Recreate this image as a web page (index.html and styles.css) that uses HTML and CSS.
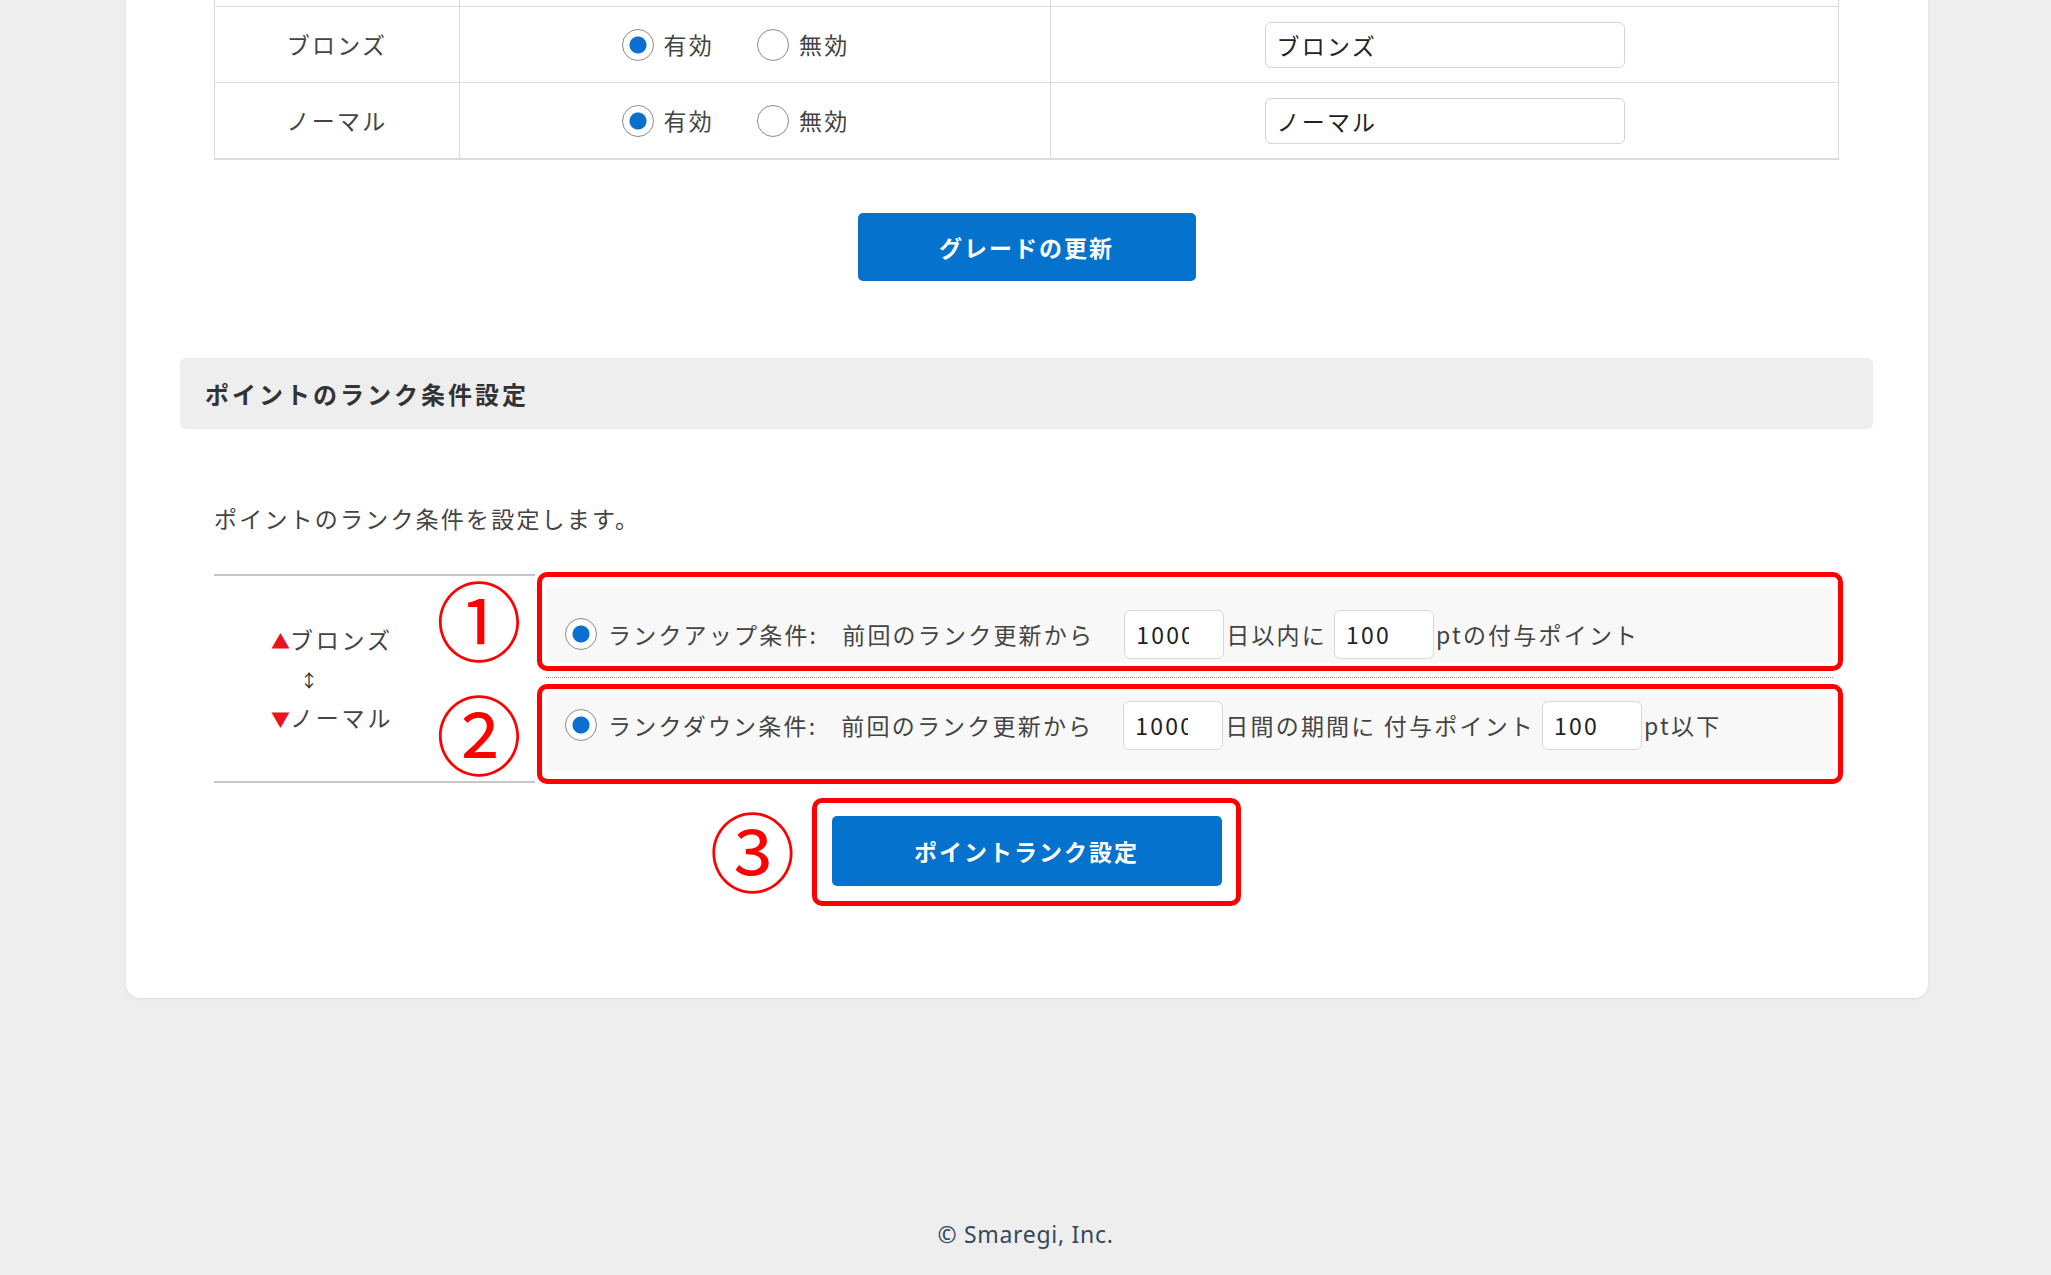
FILE: index.html
```html
<!DOCTYPE html>
<html lang="ja">
<head>
  <meta charset="UTF-8">
  <title>ポイントのランク条件設定</title>
  <link rel="stylesheet" href="styles.css">
</head>
<body>
  <div class="card">
    <table class="grade-table">
      <tr class="row-hidden">
        <td class="grade-name"></td>
        <td class="grade-state"></td>
        <td class="grade-input"></td>
      </tr>
      <tr>
        <td class="grade-name">ブロンズ</td>
        <td class="grade-state">
          <div class="radios">
            <label class="radio-label"><input type="radio" name="g1" checked>有効</label>
            <label class="radio-label"><input type="radio" name="g1">無効</label>
          </div>
        </td>
        <td class="grade-input"><input type="text" class="text-input" value="ブロンズ"></td>
      </tr>
      <tr>
        <td class="grade-name">ノーマル</td>
        <td class="grade-state">
          <div class="radios">
            <label class="radio-label"><input type="radio" name="g2" checked>有効</label>
            <label class="radio-label"><input type="radio" name="g2">無効</label>
          </div>
        </td>
        <td class="grade-input"><input type="text" class="text-input" value="ノーマル"></td>
      </tr>
    </table>

    <div class="btn-row">
      <button class="btn">グレードの更新</button>
    </div>

    <h2 class="section-title">ポイントのランク条件設定</h2>

    <p class="desc">ポイントのランク条件を設定します。</p>

    <div class="rank-block">
      <div class="rank-names">
        <div><span class="tri">▲</span>ブロンズ</div>
        <div class="updown">↕</div>
        <div><span class="tri">▼</span>ノーマル</div>
      </div>
      <div class="rank-conds">
        <div class="cond-row cond-up">
          <input type="radio" name="c1" checked>
          <span class="cond-label">ランクアップ条件:</span>
          <span>前回のランク更新から</span>
          <input type="text" class="num-input clip" value="1000">
          <span>日以内に</span>
          <input type="text" class="num-input" value="100">
          <span>ptの付与ポイント</span>
        </div>
        <div class="cond-sep"></div>
        <div class="cond-row cond-down">
          <input type="radio" name="c2" checked>
          <span class="cond-label">ランクダウン条件:</span>
          <span>前回のランク更新から</span>
          <input type="text" class="num-input clip" value="1000">
          <span>日間の期間に 付与ポイント</span>
          <input type="text" class="num-input" value="100">
          <span>pt以下</span>
        </div>
      </div>

      <span class="mark mark-1">①</span>
      <span class="mark mark-2">②</span>
      <div class="red-box box-1"></div>
      <div class="red-box box-2"></div>
    </div>

    <div class="btn-row submit-row">
      <div class="btn-wrap">
        <button class="btn btn-wide">ポイントランク設定</button>
        <span class="mark mark-3">③</span>
        <div class="red-box box-3"></div>
      </div>
    </div>
  </div>

  <footer class="footer">© Smaregi, Inc.</footer>
</body>
</html>
```

FILE: styles.css
```css
body {
  margin: 0;
  background: #eeeeee;
  font-family: "Noto Sans CJK JP", "Noto Sans", sans-serif;
  font-size: 23px;
  letter-spacing: 2.2px;
  color: #444;
}

.card {
  width: 1802px;
  margin: -70px auto 0 126px;
  padding: 0 55px 112px 54px;
  box-sizing: border-box;
  background: #fff;
  border-radius: 14px;
  box-shadow: 0 1px 3px rgba(0, 0, 0, 0.08);
}

/* grade table */
.grade-table {
  width: 1625px;
  margin: 0 0 0 34px;
  border-collapse: collapse;
  table-layout: fixed;
}
.grade-table td {
  height: 75px;
  padding: 0;
  border: 1px solid #dcdcdc;
  text-align: center;
  line-height: 1;
}
.grade-table tr:last-child td { border-bottom: 2px solid #dcdcdc; }
.grade-name { width: 244px; }
.grade-state { width: 590px; }
.radios {
  display: inline-flex;
  align-items: center;
  margin-right: 39px;
  vertical-align: middle;
}
.radio-label {
  display: inline-flex;
  align-items: center;
  gap: 10px;
}
.radio-label + .radio-label { margin-left: 43px; }

input[type=radio] {
  appearance: none;
  -webkit-appearance: none;
  width: 32px;
  height: 32px;
  margin: 0;
  flex: none;
  border: 1.5px solid #8c8c8c;
  border-radius: 50%;
  background: #fff;
}
input[type=radio]:checked {
  background: radial-gradient(circle, #0a6fcf 0 8px, #fff 9px);
}

.text-input {
  width: 360px;
  height: 46px;
  box-sizing: border-box;
  padding: 0 11px;
  border: 1px solid #d4d4d4;
  border-radius: 6px;
  font: inherit;
  letter-spacing: 2.2px;
  color: #222;
  vertical-align: middle;
}

/* buttons */
.btn-row {
  display: flex;
  justify-content: center;
  margin-top: 53px;
}
.btn {
  width: 338px;
  height: 68px;
  border: none;
  border-radius: 5px;
  background: #0572cd;
  color: #fff;
  font: bold 23px "Noto Sans CJK JP", sans-serif;
  letter-spacing: 2px;
  cursor: pointer;
}
.btn-wide { width: 390px; height: 70px; display: block; }

.section-title {
  margin: 77px 0 0;
  height: 71px;
  padding-left: 25px;
  display: flex;
  align-items: center;
  background: #eeeeee;
  border-radius: 6px;
  font-size: 24px;
  letter-spacing: 3px;
  color: #333;
}

.desc {
  margin: 71px 0 0 34px;
  line-height: 36px;
}

/* rank conditions */
.rank-block {
  position: relative;
  display: flex;
  gap: 11px;
  margin: 38px 40px 0 34px;
}
.rank-names {
  width: 321px;
  flex: none;
  border-top: 2px solid #c6c6c6;
  border-bottom: 2px solid #c6c6c6;
  display: flex;
  flex-direction: column;
  justify-content: center;
  padding-left: 57px;
  box-sizing: border-box;
  line-height: 38px;
  letter-spacing: 2.8px;
}
.tri { color: #e8141b; font-size: 19px; letter-spacing: 0; }
.updown { padding-left: 29px; font-size: 18px; color: #333; }

.rank-conds {
  flex: 1;
  padding: 14px 0 12px;
}
.cond-row {
  display: flex;
  align-items: center;
  box-sizing: border-box;
  padding-left: 19px;
  background: #f8f8f8;
  white-space: nowrap;
}
.cond-up { height: 75px; padding-top: 17px; }
.cond-down { height: 78px; padding-bottom: 14px; }
.cond-row input[type=radio] { margin-right: 11px; }
.cond-label { margin-right: 24px; }
.cond-sep {
  margin: 14px 0 15px;
  border-top: 1px dotted #8a8a8a;
}
.num-input {
  width: 100px;
  height: 49px;
  box-sizing: border-box;
  margin: 0 2px 0 7px;
  padding: 0 11px;
  border: 1px solid #d8d8d8;
  border-radius: 6px;
  background: #fff;
  font: inherit;
  letter-spacing: 2.2px;
  color: #222;
}
.num-input.clip { padding-right: 34px; margin-left: 30px; }

/* annotations */
.mark {
  position: absolute;
  color: #ff0000;
  font-size: 86px;
  line-height: 1;
  letter-spacing: 0;
}
.mark-1 { left: 222px; top: 1px; }
.mark-2 { left: 222px; top: 115px; }
.red-box {
  position: absolute;
  border: 5px solid #ff0000;
  border-radius: 10px;
  box-sizing: border-box;
}
.box-1 { left: 323px; top: -2px; width: 1306px; height: 99px; }
.box-2 { left: 323px; top: 110px; width: 1306px; height: 100px; }

.submit-row { margin-top: 33px; }
.btn-wrap { position: relative; }
.mark-3 { left: -122px; top: -10px; }
.box-3 { left: -20px; top: -18px; width: 429px; height: 108px; }

.footer {
  margin-top: 221px;
  text-align: center;
  font-family: "Noto Sans", sans-serif;
  font-size: 23px;
  letter-spacing: 0.7px;
  line-height: 30px;
  color: #34495e;
}
```
